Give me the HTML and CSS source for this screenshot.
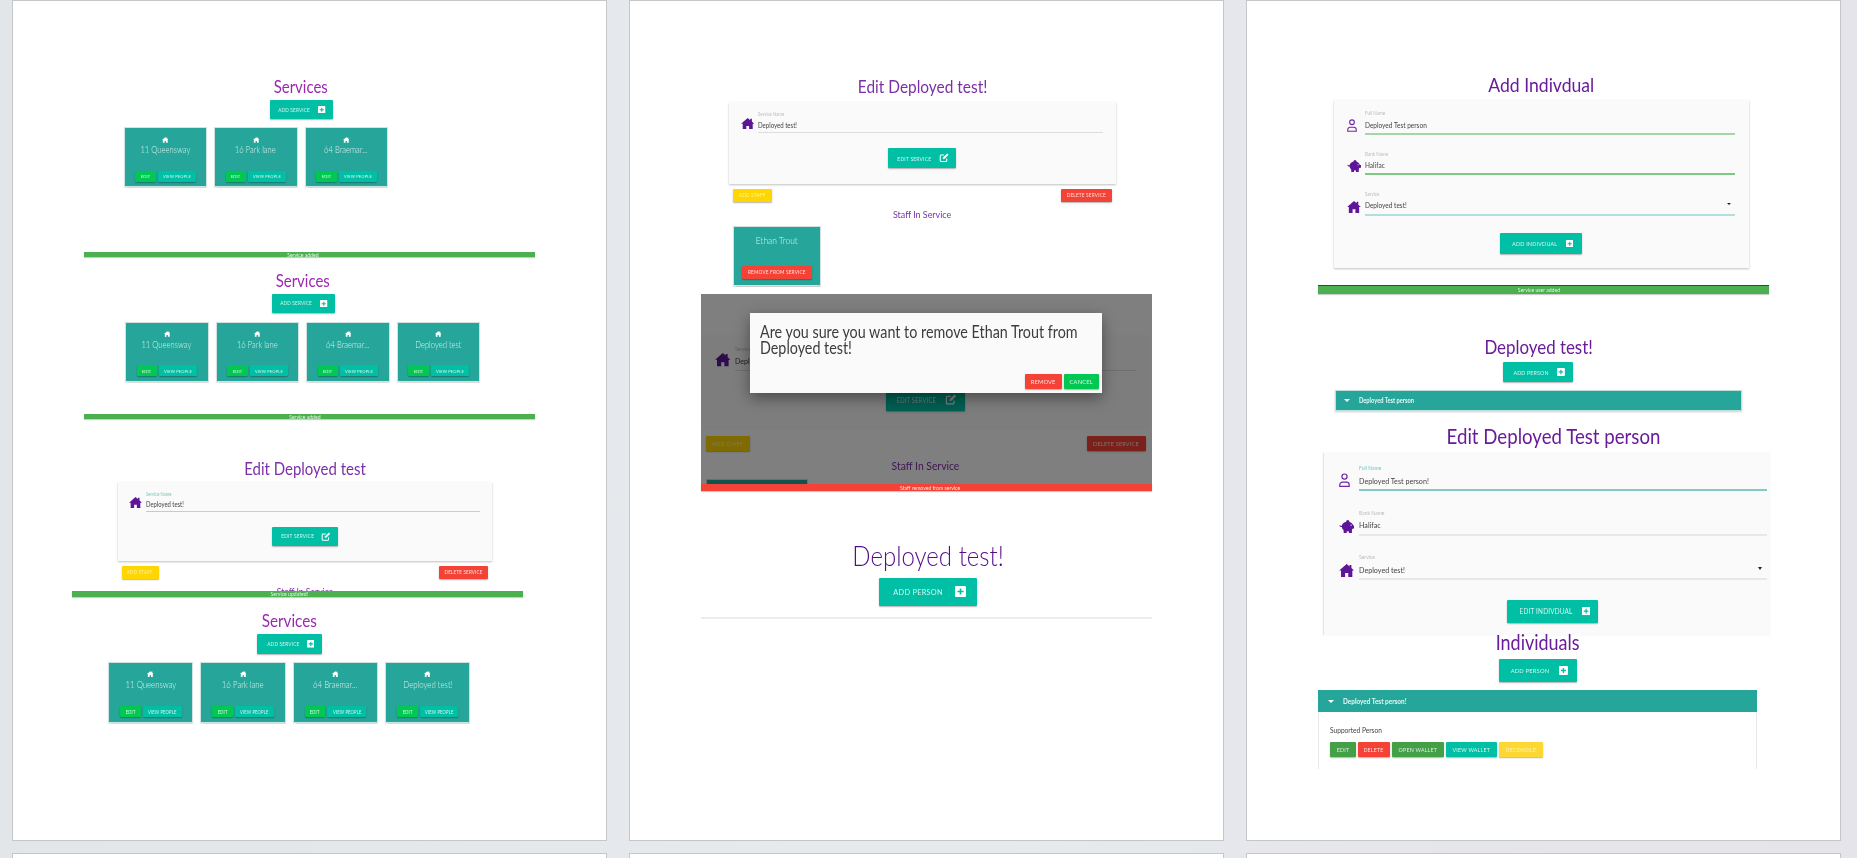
FILE: index.html
```html
<!DOCTYPE html>
<html lang="en"><head><meta charset="utf-8"><title>Test evidence</title><link rel="stylesheet" href="styles.css"></head>
<body>
<svg class="defs" width="0" height="0" aria-hidden="true">
  <symbol id="home" viewBox="0 0 24 21"><path d="M12 0 0 10.500h3V21h6.500v-6.500h5V21H21V10.500h3L19.500 6.500V1.500h-3v2.400z"/></symbol>
  <symbol id="plus" viewBox="0 0 16 16"><rect width="16" height="16" rx="1.500" fill="#fff"/><path d="M6.800 3.500h2.400v3.300h3.300v2.400H9.200v3.300H6.800V9.200H3.500V6.800h3.300z" fill="#00bfa5"/></symbol>
  <symbol id="edit" viewBox="0 0 24 24"><path d="M19 13.500V19a2 2 0 0 1-2 2H5a2 2 0 0 1-2-2V7a2 2 0 0 1 2-2h7" fill="none" stroke="#fff" stroke-width="2.600"/><path d="M9.500 15l.8-4.500L20 1l3.500 3.500-9.600 9.700z" fill="#fff"/></symbol>
  <symbol id="person" viewBox="0 0 20 26"><circle cx="10" cy="6.500" r="4.700" fill="none" stroke="currentColor" stroke-width="2.200"/><path d="M1.500 24.500v-3a5 5 0 0 1 5-5h7a5 5 0 0 1 5 5v3z" fill="none" stroke="currentColor" stroke-width="2.200"/></symbol>
  <symbol id="piggy" viewBox="0 0 28 24"><circle cx="16" cy="3" r="3"/><ellipse cx="15.500" cy="12" rx="10.500" ry="9"/><path d="M8.500 17h5.500v7H8.500zM18 17h5.500v7H18zM24 10h4v5.500h-4zM1 9c1.500 1.600 3 2 5 1.400v2c-2.400.8-4.200.2-5-1.400z"/><circle cx="22" cy="9.500" r="1.100" fill="#fff"/></symbol>
</svg>

<main class="sheet">

<section class="page">
  <div class="shot services s1">
    <h2 class="title title-light"><span class="t">Services</span></h2>
    <a class="btn teal add-service"><span class="t">Add service</span><svg class="ic-plus"><use href="#plus"/></svg></a>
    <div class="cards">
      <article class="card"><svg class="ic-card"><use href="#home"/></svg><p class="name"><span class="t">11 Queensway</span></p><div class="actions"><a class="btn green mini-edit"><span class="t">Edit</span></a><a class="btn teal mini-view"><span class="t">View people</span></a></div></article>
      <article class="card"><svg class="ic-card"><use href="#home"/></svg><p class="name"><span class="t">16 Park lane</span></p><div class="actions"><a class="btn green mini-edit"><span class="t">Edit</span></a><a class="btn teal mini-view"><span class="t">View people</span></a></div></article>
      <article class="card"><svg class="ic-card"><use href="#home"/></svg><p class="name"><span class="t">64 Braemar...</span></p><div class="actions"><a class="btn green mini-edit"><span class="t">Edit</span></a><a class="btn teal mini-view"><span class="t">View people</span></a></div></article>
    </div>
  </div>

  <div class="shot services s2">
    <div class="snack snack-a"><span class="t">Service added</span></div>
    <div class="inner">
      <h2 class="title title-light"><span class="t">Services</span></h2>
      <a class="btn teal add-service"><span class="t">Add service</span><svg class="ic-plus"><use href="#plus"/></svg></a>
      <div class="cards">
        <article class="card"><svg class="ic-card"><use href="#home"/></svg><p class="name"><span class="t">11 Queensway</span></p><div class="actions"><a class="btn green mini-edit"><span class="t">Edit</span></a><a class="btn teal mini-view"><span class="t">View people</span></a></div></article>
        <article class="card"><svg class="ic-card"><use href="#home"/></svg><p class="name"><span class="t">16 Park lane</span></p><div class="actions"><a class="btn green mini-edit"><span class="t">Edit</span></a><a class="btn teal mini-view"><span class="t">View people</span></a></div></article>
        <article class="card"><svg class="ic-card"><use href="#home"/></svg><p class="name"><span class="t">64 Braemar...</span></p><div class="actions"><a class="btn green mini-edit"><span class="t">Edit</span></a><a class="btn teal mini-view"><span class="t">View people</span></a></div></article>
        <article class="card"><svg class="ic-card"><use href="#home"/></svg><p class="name"><span class="t">Deployed test</span></p><div class="actions"><a class="btn green mini-edit"><span class="t">Edit</span></a><a class="btn teal mini-view"><span class="t">View people</span></a></div></article>
      </div>
    </div>
  </div>

  <div class="shot s3 snack snack-b"><span class="t">Service added</span></div>

  <div class="shot edit s4">
    <h2 class="title title-mid"><span class="t">Edit Deployed test</span></h2>
    <div class="form">
      <div class="row"><svg class="ic-home"><use href="#home"/></svg><div class="field focus"><label><span class="t tl">Service Name</span></label><div class="val"><span class="t tl">Deployed test!</span></div></div></div>
      <a class="btn teal edit-service"><span class="t">Edit service</span><svg class="ic-edit"><use href="#edit"/></svg></a>
    </div>
    <div class="btn-row"><a class="btn yellow add-staff"><span class="t">Add staff</span></a><a class="btn red del-service"><span class="t">Delete service</span></a></div>
    <h3 class="staff-title"><span class="t">Staff In Service</span></h3>
  </div>

  <div class="shot services s5">
    <div class="snack snack-c"><span class="t">Service updated!</span></div>
    <div class="inner">
      <h2 class="title title-light"><span class="t">Services</span></h2>
      <a class="btn teal add-service"><span class="t">Add service</span><svg class="ic-plus"><use href="#plus"/></svg></a>
      <div class="cards">
        <article class="card"><svg class="ic-card"><use href="#home"/></svg><p class="name"><span class="t">11 Queensway</span></p><div class="actions"><a class="btn green mini-edit"><span class="t">Edit</span></a><a class="btn teal mini-view"><span class="t">View people</span></a></div></article>
        <article class="card"><svg class="ic-card"><use href="#home"/></svg><p class="name"><span class="t">16 Park lane</span></p><div class="actions"><a class="btn green mini-edit"><span class="t">Edit</span></a><a class="btn teal mini-view"><span class="t">View people</span></a></div></article>
        <article class="card"><svg class="ic-card"><use href="#home"/></svg><p class="name"><span class="t">64 Braemar...</span></p><div class="actions"><a class="btn green mini-edit"><span class="t">Edit</span></a><a class="btn teal mini-view"><span class="t">View people</span></a></div></article>
        <article class="card"><svg class="ic-card"><use href="#home"/></svg><p class="name"><span class="t">Deployed test!</span></p><div class="actions"><a class="btn green mini-edit"><span class="t">Edit</span></a><a class="btn teal mini-view"><span class="t">View people</span></a></div></article>
      </div>
    </div>
  </div>
</section>

<section class="page">
  <div class="shot edit p2-edit">
    <h2 class="title title-mid"><span class="t">Edit Deployed test!</span></h2>
    <div class="form">
      <div class="row"><svg class="ic-home"><use href="#home"/></svg><div class="field"><label><span class="t tl">Service Name</span></label><div class="val"><span class="t tl">Deployed test!</span></div></div></div>
      <a class="btn teal edit-service"><span class="t">Edit service</span><svg class="ic-edit"><use href="#edit"/></svg></a>
    </div>
    <div class="btn-row"><a class="btn yellow add-staff"><span class="t">Add staff</span></a><a class="btn red del-service"><span class="t">Delete service</span></a></div>
    <h3 class="staff-title"><span class="t">Staff In Service</span></h3>
    <article class="staff-card"><p class="staff-name"><span class="t">Ethan Trout</span></p><a class="btn red remove-staff"><span class="t">Remove from service</span></a></article>
  </div>

  <div class="shot modal-shot">
    <div class="edit under">
      <h2 class="title title-mid"><span class="t">Edit Deployed test!</span></h2>
      <div class="form">
        <div class="row"><svg class="ic-home"><use href="#home"/></svg><div class="field"><label><span class="t tl">Service Name</span></label><div class="val"><span class="t tl">Deployed test!</span></div></div></div>
        <a class="btn teal edit-service"><span class="t">Edit service</span><svg class="ic-edit"><use href="#edit"/></svg></a>
      </div>
      <div class="btn-row"><a class="btn yellow add-staff"><span class="t">Add staff</span></a><a class="btn red del-service"><span class="t">Delete service</span></a></div>
      <h3 class="staff-title"><span class="t">Staff In Service</span></h3>
      <article class="staff-card"></article>
    </div>
    <div class="scrim"></div>
    <div class="dialog">
      <p class="dialog-text"><span class="t tl">Are you sure you want to remove Ethan Trout from<br>Deployed test!</span></p>
      <div class="dialog-actions"><a class="btn red dlg-btn"><span class="t">Remove</span></a><a class="btn green dlg-btn dlg-cancel"><span class="t">Cancel</span></a></div>
    </div>
  </div>
  <div class="shot snack snack-red"><span class="t">Staff removed from service</span></div>

  <div class="shot deployed-big">
    <h2 class="title"><span class="t">Deployed test!</span></h2>
    <a class="btn teal add-person"><span class="t">Add person</span><svg class="ic-plus"><use href="#plus"/></svg></a>
    <div class="rule"></div>
  </div>
</section>

<section class="page">
  <div class="shot add-ind">
    <h2 class="title"><span class="t">Add Indivdual</span></h2>
    <div class="form form-ind">
      <div class="row"><svg class="ic-person"><use href="#person"/></svg><div class="field line-a"><label><span class="t tl">Full Name</span></label><div class="val"><span class="t tl">Deployed Test person</span></div></div></div>
      <div class="row"><svg class="ic-piggy"><use href="#piggy"/></svg><div class="field line-b"><label><span class="t tl">Bank Name</span></label><div class="val"><span class="t tl">Halifac</span></div></div></div>
      <div class="row"><svg class="ic-home"><use href="#home"/></svg><div class="field line-c select"><label><span class="t tl">Service</span></label><div class="val"><span class="t tl">Deployed test!</span></div></div></div>
      <a class="btn teal ind-btn"><span class="t">Add Indivdual</span><svg class="ic-plus"><use href="#plus"/></svg></a>
    </div>
  </div>

  <div class="shot snack snack-user"><span class="t">Service user added</span></div>

  <div class="shot list-shot deployed-small">
    <h2 class="title"><span class="t">Deployed test!</span></h2>
    <a class="btn teal add-person"><span class="t">Add person</span><svg class="ic-plus"><use href="#plus"/></svg></a>
    <div class="bar"><i class="caret"></i><span class="t tl">Deployed Test person</span></div>
  </div>

  <div class="shot edit-ind">
    <h2 class="title"><span class="t">Edit Deployed Test person</span></h2>
    <div class="form form-ind form-clip">
      <div class="row"><svg class="ic-person"><use href="#person"/></svg><div class="field line-focus"><label><span class="t tl">Full Name</span></label><div class="val"><span class="t tl">Deployed Test person!</span></div></div></div>
      <div class="row"><svg class="ic-piggy"><use href="#piggy"/></svg><div class="field line-grey"><label><span class="t tl">Bank Name</span></label><div class="val"><span class="t tl">Halifac</span></div></div></div>
      <div class="row"><svg class="ic-home"><use href="#home"/></svg><div class="field line-grey select"><label><span class="t tl">Service</span></label><div class="val"><span class="t tl">Deployed test!</span></div></div></div>
      <a class="btn teal ind-btn"><span class="t">Edit Indivdual</span><svg class="ic-plus"><use href="#plus"/></svg></a>
    </div>
  </div>

  <div class="shot list-shot individuals">
    <h2 class="title"><span class="t">Individuals</span></h2>
    <a class="btn teal add-person"><span class="t">Add person</span><svg class="ic-plus"><use href="#plus"/></svg></a>
    <div class="panel">
      <div class="bar"><i class="caret"></i><span class="t tl">Deployed Test person!</span></div>
      <div class="panel-body">
        <p class="role"><span class="t tl">Supported Person</span></p>
        <div class="panel-actions">
          <a class="btn dgreen pa-edit"><span class="t">Edit</span></a>
          <a class="btn red pa-del"><span class="t">Delete</span></a>
          <a class="btn dgreen pa-open"><span class="t">Open wallet</span></a>
          <a class="btn teal pa-view"><span class="t">View wallet</span></a>
          <a class="btn lyellow pa-rec"><span class="t">Reconsile</span></a>
        </div>
      </div>
    </div>
  </div>
</section>

<section class="page"></section>
<section class="page"></section>
<section class="page"></section>
</main>
</body></html>
```
FILE: styles.css
```css
* { box-sizing: border-box; }
html, body { margin: 0; height: 858px; overflow: hidden; }
body {
  background: linear-gradient(90deg, #e2e6e9 0%, #e6eaee 45%, #e5e4ea 100%);
  font-family: Lato, "Liberation Sans", sans-serif;
  color: #444;
}
.defs { position: absolute; }
.sheet {
  display: grid;
  grid-template-columns: 595px 595px 595px;
  grid-auto-rows: 841px;
  column-gap: 22px;
  row-gap: 12px;
  padding-left: 12px;
}
.page {
  position: relative;
  background: #fff;
  border: 1px solid #c4c6c8;
  overflow: hidden;
}
.shot { position: absolute; filter: blur(.3px); }

/* squeezed text as in the pasted screenshots */
.t { display: inline-block; transform: scaleX(.88); white-space: nowrap; }
.tl { transform-origin: left center; }

h2, h3, p { margin: 0; font-weight: 400; }
.title {
  height: 2em; line-height: 2em; text-align: center; color: #6a1b9a;
  font-size: 1em; white-space: nowrap;
}
.title .t { font-size: 1.700em; line-height: 1.140; }
.title-light { color: #9c27b0; }
.title-mid { color: #7b2fa8; }

/* buttons */
.btn {
  display: flex; align-items: center; justify-content: center;
  color: #fff; text-transform: uppercase; letter-spacing: .02em;
  border-radius: 1px; box-shadow: 0 1px 1.500px rgba(0,0,0,.3); flex: none;
}
.teal { background: #00bfa5; color: #d6f5f0; }
.green { background: #00c853; color: #d8f8e4; }
.dgreen { background: #43a047; color: #dcefdc; }
.red { background: #f44336; color: #fde0dd; }
.yellow { background: #ffd600; color: #fff3a6; }
.lyellow { background: #fdd835; color: #fff3b0; }
.ic-plus { width: .75em; height: .75em; margin-left: .55em; flex: none; }
.ic-edit { width: .95em; height: .95em; margin-left: .5em; flex: none; }

/* snackbars */
.snack {
  display: flex; align-items: center; justify-content: center; align-self: stretch;
  background: #4caf50; color: #e6f4e6; font-size: 5.800px;
  box-shadow: 0 1px 1px rgba(0,0,0,.2);
}
.shot.snack { width: 451px; }
.snack .t { line-height: 1; }
.snack-a { height: 5.300px; padding-right: 13px; }
.snack-b { height: 5px; padding-right: 9px; }
.snack-c { height: 6px; padding-right: 16px; }

/* services block */
.services { display: flex; flex-direction: column; align-items: center; font-size: 10px; }
.inner { display: flex; flex-direction: column; align-items: center; align-self: stretch; }
.title + .add-service { margin-top: .3em; }
.add-service { width: 6.300em; height: 1.900em; }
.add-service .t { font-size: .53em; }
.cards { display: flex; gap: .7em; align-self: stretch; margin-top: .8em; }
.card {
  width: 8.350em; height: 6em; background: #26a69a; border: 1px solid #cfe4e1;
  display: flex; flex-direction: column; align-items: center; flex: none;
  box-shadow: 0 .5px 1px rgba(0,0,0,.15);
}
.ic-card { width: .65em; height: .6em; margin-top: .85em; fill: #fff; flex: none; }
.name { font-size: .87em; line-height: 1; color: #d6f0ec; margin-top: .42em; font-weight: 300; }
.actions { display: flex; gap: .2em; margin-top: auto; margin-bottom: .45em; }
.mini-edit { width: 2.050em; height: 1.100em; }
.mini-view { width: 3.800em; height: 1.100em; }
.mini-edit .t, .mini-view .t { font-size: .46em; }

.s1 { left: 71px; top: 76px; width: 434px; }
.s1 .cards { padding-left: 3.950em; }
.s2 { left: 71px; top: 251px; width: 451px; }
.s2 .inner { padding-right: 13px; }
.s2 .title { margin-top: 1.370em; }
.s2 .cards { padding-left: 4.100em; margin-top: .9em; }
.s3 { left: 71px; top: 413px; }
.s4 { left: 104.500px; top: 458px; }
.s5 { left: 59px; top: 590px; width: 451px; font-size: 10.200px; }
.s5 .inner { padding-right: 16px; }
.s5 .title { margin-top: 1.350em; }
.s5 .cards { padding-left: 3.550em; margin-top: .8em; }

/* edit-service block */
.edit { width: 37.450em; font-size: 10px; display: flex; flex-direction: column; }
.form {
  background: #fafafa; box-shadow: 0 1px 2px rgba(0,0,0,.25);
  display: flex; flex-direction: column; align-items: center;
}
.edit .form { height: 7.900em; margin-top: .3em; padding: .95em 1.200em 0 1.150em; }
.row { display: flex; align-self: stretch; align-items: center; }
.ic-home { width: 1.300em; height: 1.130em; fill: #5e1598; flex: none; margin-right: .35em; margin-top: .2em; }
.field { flex: 1; border-bottom: 1px solid #ddd; padding-bottom: .3em; position: relative; }
.field label { display: block; height: .5em; line-height: .5em; font-size: 1em; color: #bdbdbd; }
.field label .t { font-size: .48em; line-height: 1; vertical-align: top; }
.val { height: .8em; line-height: .8em; margin-top: .35em; color: #444; }
.val .t { font-size: .67em; line-height: 1.200; font-weight: 400; vertical-align: top; }
.focus { border-bottom-color: #a3dcd5; }
.focus label { color: #7cc8bf; }
.edit-service { width: 6.600em; height: 1.900em; margin-top: 1.480em; }
.edit-service .t { font-size: .55em; }
.btn-row { display: flex; justify-content: space-between; padding: 0 .4em; margin-top: .5em; }
.add-staff { width: 3.720em; height: 1.270em; }
.del-service { width: 4.900em; height: 1.270em; }
.add-staff .t, .del-service .t { font-size: .52em; }
.staff-title { height: 1.600em; line-height: 1.600em; margin-top: .4em; text-align: center; font-size: 1em; color: #7b2fa8; font-weight: 400; }
.staff-title .t { font-size: .98em; line-height: 1.200; }
.staff-card {
  width: 8.500em; height: 5.850em; margin: .3em 0 0 .4em; background: #26a69a;
  border: 1px solid #cfe4e1; box-shadow: 0 .5px 1px rgba(0,0,0,.2);
  display: flex; flex-direction: column; align-items: center; flex: none;
}
.staff-name { font-size: .93em; line-height: 1; color: #d6f0ec; margin-top: 1em; font-weight: 300; }
.remove-staff { width: 6.700em; height: 1.260em; margin-top: auto; margin-bottom: .62em; }
.remove-staff .t { font-size: .52em; }

.p2-edit { left: 99px; top: 76px; font-size: 10.330px; }
.p2-edit .form { margin-top: .42em; }

/* dialog screenshot */
.modal-shot { left: 71px; top: 293px; width: 451px; height: 191px; background: #fff; overflow: hidden; }
.edit.under { font-size: 12px; margin-top: 15px; }
.edit.under .title { font-weight: 300; }
.edit.under .form { box-shadow: none; margin-top: .17em; }
.scrim { position: absolute; inset: 0; background: rgba(0,0,0,.5); }
.dialog {
  position: absolute; left: 49px; top: 18.700px; width: 351.600px; height: 80.300px;
  background: #fafafa; box-shadow: 0 5px 14px rgba(0,0,0,.4);
}
.dialog-text { padding: 11.500px 0 0 10px; font-size: 16.300px; line-height: 15.700px; font-weight: 400; color: #3c3c3c; }
.dialog-actions { position: absolute; right: 2.600px; bottom: 3.700px; display: flex; gap: 2px; font-size: 10px; }
.dlg-btn { width: 37px; height: 15.300px; }
.dlg-cancel { width: 35.500px; }
.dlg-btn .t { font-size: 6.500px; }
.snack-red {
  left: 71px; top: 483px; height: 7px; background: #f44336; color: #fde4e1; padding-left: 7px;
}
.deployed-big {
  left: 71px; top: 539px; width: 451px; font-size: 14.700px;
  display: flex; flex-direction: column; align-items: center; padding-left: 3px;
}
.deployed-big .title { height: 36px; line-height: 36px; font-weight: 300; color: #560d8c; }
.deployed-big .title .t { font-size: 27.300px; }
.deployed-big .add-person { margin-top: 2px; }
.add-person { width: 6.700em; height: 1.900em; }
.add-person .t { font-size: .57em; }
.rule { align-self: stretch; margin: 11px 0 0 -3px; height: 2px; background: #ececec; }

/* individual forms */
.add-ind { left: 86.700px; top: 72px; width: 41.550em; font-size: 10px; }
.add-ind .title { height: 2.400em; line-height: 2.400em; }
.add-ind .title .t { font-size: 2em; }
.form-ind { margin-top: .33em; height: 16.800em; padding: 1.120em 1.420em 0 1.300em; }
.form-ind .row { margin-bottom: 1.650em; align-items: flex-start; }
.form-ind .field { padding-bottom: .35em; border-bottom-width: 2px; }
.form-ind .val { margin-top: .52em; }
.form-ind .val .t { font-size: .74em; }
.form-ind label .t { font-size: .52em; }
.form-ind .ic-home, .ic-piggy { width: 1.400em; height: 1.200em; margin: .88em .44em 0 0; flex: none; fill: #5e1598; }
.ic-person { width: 1em; height: 1.300em; margin: .72em .84em 0 0; flex: none; color: #7026a8; }
.line-a { border-bottom-color: #a5d6a7; }
.line-b { border-bottom-color: #81c784; }
.line-c { border-bottom-color: #b2dfdb; }
.line-grey { border-bottom-color: #e8e8e8; }
.line-focus { border-bottom-color: #80cbc4; }
.line-focus label { color: #76c9bf; }
.select::after {
  content: ""; position: absolute; right: .42em; top: 1.100em;
  border: .2em solid transparent; border-top: .28em solid #222; border-bottom: 0;
}
.ind-btn { width: 8.250em; height: 2.090em; margin-top: .1em; }
.ind-btn .t { font-size: .62em; }
.edit-ind .ind-btn .t { font-size: .66em; }

.snack-user { left: 71px; top: 284px; height: 9px; border-top: 1px solid #6a1b9a; padding-right: 10px; }

.list-shot { display: flex; flex-direction: column; align-items: center; width: 450px; }
.deployed-small { left: 66.300px; top: 334.700px; font-size: 10.500px; }
.deployed-small .title { height: 24px; line-height: 24px; }
.deployed-small .title .t { font-size: 19.200px; }
.deployed-small .add-person { margin-top: 2.600px; }
.deployed-small .bar { width: 406.600px; margin-top: 7.700px; height: 21px; }

.bar {
  display: flex; align-items: center; background: #26a69a; color: #e8f7f5;
  border: 1px solid #bfe0db; box-shadow: 0 1px 2px rgba(0,0,0,.2); padding-left: 8px; flex: none;
}
.bar .t { font-size: 6.500px; font-weight: 700; margin-left: 9px; }
.panel .bar .t { font-size: 7.300px; }
.caret { border: 3px solid transparent; border-top: 3.500px solid #fff; border-bottom: 0; flex: none; margin-top: 1px; }

.edit-ind { left: 76.800px; top: 423px; width: 447.100px; font-size: 11px; }
.edit-ind .title { height: 26px; line-height: 26px; padding-left: 12px; }
.edit-ind .title .t { font-size: 21.200px; }
.edit-ind .form-ind { margin-top: 3px; height: 16.520em; overflow: hidden; padding: 1.120em .4em 0 1.380em; box-shadow: -1px 0 1px rgba(0,0,0,.1); }
.edit-ind .form-ind .row { margin-bottom: 1.700em; }

.individuals { left: 65.900px; top: 630px; font-size: 11.900px; }
.individuals .title { height: 24px; line-height: 24px; }
.individuals .title .t { font-size: 20.400px; }
.individuals .add-person { margin-top: 4px; width: 6.520em; }
.individuals .add-person .t { font-size: .55em; }
.panel { width: 439.200px; margin-top: 8.700px; }
.panel .bar { height: 22px; padding-left: 9.600px; border: 0; box-shadow: none; }
.panel-body {
  height: 57px; background: #fff; border: solid #e8e8e8; border-width: 0 1.500px;
  padding: 14px 0 0 10.700px;
}
.role { font-size: 7.500px; line-height: 9px; font-weight: 400; color: #444; }
.panel-actions { display: flex; gap: 2px; margin-top: 6.500px; }
.panel-actions .btn { height: 15px; }
.panel-actions .t { font-size: 6px; }
.pa-edit { width: 25.600px; }
.pa-del { width: 32.600px; }
.pa-open { width: 52px; }
.pa-view { width: 51.200px; }
.pa-rec { width: 44.100px; }
```
